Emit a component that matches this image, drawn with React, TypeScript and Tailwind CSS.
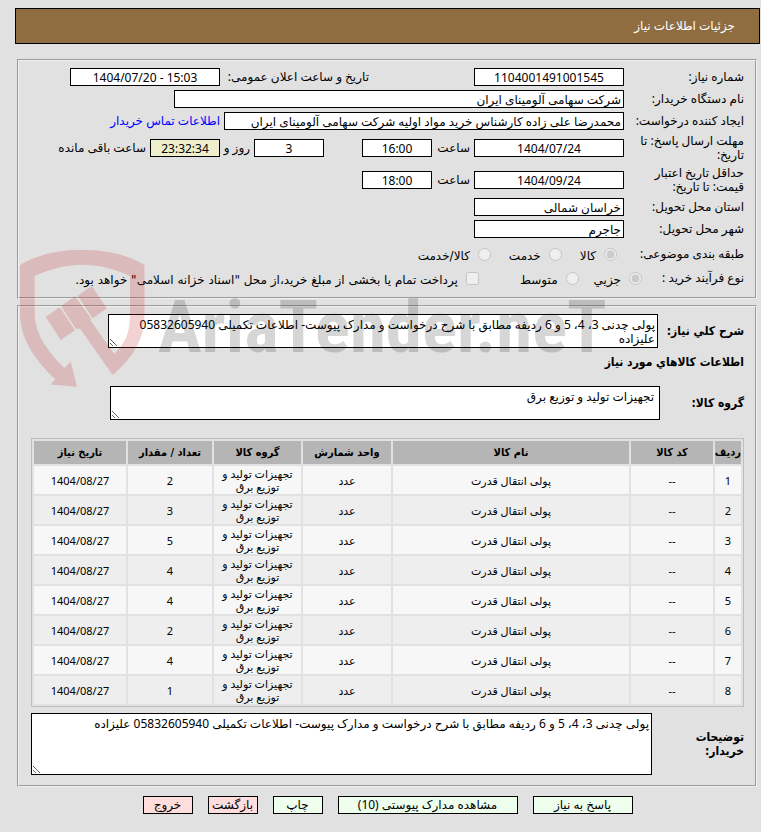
import React from 'react';

const fieldBox = 'h-[18px] border border-black bg-white px-[2px] text-[12px] leading-[16px] outline-none';
const panel = 'min-w-0 border-2 border-[#f0f0f0] [border-style:groove]';
const strong = "font-['DejaVu_Sans_Condensed','DejaVu_Sans',sans-serif] font-bold";

const items = [
  { id: 1, qty: 2 },
  { id: 2, qty: 3 },
  { id: 3, qty: 5 },
  { id: 4, qty: 4 },
  { id: 5, qty: 4 },
  { id: 6, qty: 2 },
  { id: 7, qty: 4 },
  { id: 8, qty: 1 },
];

const columns = [
  { title: 'ردیف', width: 'w-[26px]' },
  { title: 'کد کالا', width: 'w-[82px]' },
  { title: 'نام کالا', width: '' },
  { title: 'واحد شمارش', width: 'w-[88px]' },
  { title: 'گروه کالا', width: 'w-[87px]' },
  { title: 'تعداد / مقدار', width: 'w-[84px]' },
  { title: 'تاریخ نیاز', width: 'w-[92px]' },
];

interface RowProps {
  id?: string;
  label: string;
  children: React.ReactNode;
}

const Row: React.FC<RowProps> = ({ id, label, children }) => (
  <div className="flex min-h-[18px] items-center">
    <label htmlFor={id} className="w-[120px] shrink-0 pl-1">{label}</label>
    {children}
  </div>
);

interface ChoiceProps {
  type?: 'radio' | 'checkbox';
  name: string;
  text: string;
  checked?: boolean;
}

const Choice: React.FC<ChoiceProps> = ({ type = 'radio', name, text, checked = false }) => (
  <label className="flex items-center gap-2 whitespace-nowrap font-['DejaVu_Sans',sans-serif]">
    <input type={type} name={name} defaultChecked={checked} disabled className="m-0 size-[13px]" />
    <span className="pt-1">{text}</span>
  </label>
);

const Watermark: React.FC = () => (
  <svg
    aria-hidden="true"
    className="pointer-events-none absolute top-[245px] left-[15px]"
    width="600"
    height="150"
    viewBox="15 245 600 150"
  >
    <g fill="#c01c20" fillOpacity="0.2">
      <path d="M20 265.300C35 255 58 250 82 250S130 255 144.500 265.300V314C144.500 340 133 357 112.700 375L80 328.500L76 329L61 306L75 296.300L91 318.500L90.500 320.500L114.300 354C125 343 130 334 130 315V276C97 261 68 261 34.700 276V313C34.700 334 48 352 64.500 368L70.700 361.700L77 386.700L50.700 384.500L55.200 379.300C36 361 20 339 20 314Z" />
      <path d="M45.700 316.700L59.700 307.300L75 330.300L60.700 340Z" />
      <path d="M77.700 295.700L91.700 286L106.700 308.300L92.700 318.300Z" />
    </g>
    <text
      x="158"
      y="352"
      direction="ltr"
      fill="#000000"
      fillOpacity="0.16"
      className="font-['Roboto_Condensed','Open_Sans_Condensed','Noto_Sans_ExtraCondensed','Noto_Sans_Condensed','Liberation_Sans',sans-serif] text-[73px] font-bold"
    >
      AriaTender.neT
    </text>
  </svg>
);

const App: React.FC = () => {
  return (
    <div
      dir="rtl"
      className="relative min-h-screen bg-[#e1e1e1] pt-2 pr-px pb-4 pl-[15px] font-['Noto_Sans','DejaVu_Sans',sans-serif] text-[12px] leading-[14px] text-black"
    >
      <header className="flex h-9 items-center border border-black bg-[#8f6d40] px-6 text-white">
        <h1>جزئیات اطلاعات نیاز</h1>
      </header>

      <main className="mt-[15px] mr-[3px] ml-[2px] flex flex-col gap-[6px]">
        <fieldset className={`${panel} px-[11px] pt-[7px] pb-2`}>
          <div className="flex flex-col gap-1">
            <Row id="number" label="شماره نیاز:">
              <input id="number" readOnly defaultValue="1104001491001545" className={`${fieldBox} w-[150px] text-center`} />
              <div className="mr-[105px] flex items-center">
                <label htmlFor="announce" className="w-[149px] whitespace-nowrap">تاریخ و ساعت اعلان عمومی:</label>
                <input id="announce" dir="ltr" readOnly defaultValue="1404/07/20 - 15:03" className={`${fieldBox} w-[150px] text-center`} />
              </div>
            </Row>
            <Row id="buyer" label="نام دستگاه خریدار:">
              <input id="buyer" readOnly defaultValue="شرکت سهامی آلومینای ایران" className={`${fieldBox} w-[450px]`} />
            </Row>
            <Row id="creator" label="ایجاد کننده درخواست:">
              <input id="creator" readOnly defaultValue="محمدرضا علی زاده کارشناس خرید مواد اولیه شرکت سهامی آلومینای ایران" className={`${fieldBox} w-[400px]`} />
              <a href="#contact" className="mr-1 whitespace-nowrap text-[#0000ff]">اطلاعات تماس خریدار</a>
            </Row>
            <Row id="deadline" label="مهلت ارسال پاسخ: تا تاریخ:">
              <input id="deadline" readOnly defaultValue="1404/07/24" className={`${fieldBox} w-[150px] text-center`} />
              <label htmlFor="deadline-time" className="w-[42px] pr-1">ساعت</label>
              <input id="deadline-time" readOnly defaultValue="16:00" className={`${fieldBox} w-[70px] text-center`} />
              <input id="days" readOnly defaultValue="3" className={`${fieldBox} mr-[38px] w-[70px] text-center`} />
              <label htmlFor="days" className="w-[34px] pr-1 whitespace-nowrap">روز و</label>
              <input id="left" readOnly defaultValue="23:32:34" className="h-[18px] w-[70px] border border-black bg-[#eeeecc] text-center text-[12px] leading-[16px] outline-none" />
              <label htmlFor="left" className="pr-1 whitespace-nowrap">ساعت باقی مانده</label>
            </Row>
            <Row id="validity" label="حداقل تاریخ اعتبار قیمت: تا تاریخ:">
              <input id="validity" readOnly defaultValue="1404/09/24" className={`${fieldBox} w-[150px] text-center`} />
              <label htmlFor="validity-time" className="w-[42px] pr-1">ساعت</label>
              <input id="validity-time" readOnly defaultValue="18:00" className={`${fieldBox} w-[70px] text-center`} />
            </Row>
            <Row id="province" label="استان محل تحویل:">
              <input id="province" readOnly defaultValue="خراسان شمالی" className={`${fieldBox} w-[150px]`} />
            </Row>
            <Row id="city" label="شهر محل تحویل:">
              <input id="city" readOnly defaultValue="جاجرم" className={`${fieldBox} w-[150px]`} />
            </Row>
          </div>

          <div className="mt-[5px] flex h-[22px] items-center">
            <span className="w-[119px]">طبقه بندی موضوعی:</span>
            <div className="flex gap-[18px] pr-2">
              <Choice name="category" text="کالا" checked />
              <Choice name="category" text="خدمت" />
              <Choice name="category" text="کالا/خدمت" />
            </div>
          </div>
          <div className="mt-[2px] flex h-[22px] items-center">
            <span className="w-[102px]">نوع فرآیند خرید :</span>
            <div className="flex gap-[15px]">
              <Choice name="process" text="جزیي" checked />
              <Choice name="process" text="متوسط" />
            </div>
            <div className="mr-[41px]">
              <Choice type="checkbox" name="treasury" text={'پرداخت تمام یا بخشی از مبلغ خرید،از محل "اسناد خزانه اسلامی" خواهد بود.'} />
            </div>
          </div>
        </fieldset>

        <fieldset className={`${panel} pt-[7px] pr-[11px] pb-[10px] pl-3`}>
          <div className="flex items-center">
            <label htmlFor="summary" className={`${strong} w-[86px] shrink-0 whitespace-nowrap`}>شرح کلي نیاز:</label>
            <textarea
              id="summary"
              readOnly
              defaultValue="پولی چدنی 3، 4، 5 و 6 ردیفه مطابق با شرح درخواست و مدارک پیوست- اطلاعات تکمیلی 05832605940 علیزاده"
              className="h-[34px] w-[550px] resize overflow-hidden border border-black bg-white px-[2px] py-[3px] outline-none"
            />
          </div>
          <h2 className={`${strong} mt-[7px]`}>اطلاعات کالاهاي مورد نیاز</h2>
          <div className="mt-[17px] flex items-center">
            <label htmlFor="group" className={`${strong} w-[84px] shrink-0`}>گروه کالا:</label>
            <textarea
              id="group"
              readOnly
              defaultValue="تجهیزات تولید و توزیع برق"
              className="h-[34px] w-[550px] resize overflow-hidden border border-black bg-white px-[5px] py-[3px] outline-none"
            />
          </div>

          <table className="mt-[18px] w-full table-fixed border-separate border-spacing-[2px] border border-[#bebebe] text-center text-[11px] leading-[13px]">
            <thead>
              <tr className="h-[23px] bg-[#b5b5b5]">
                {columns.map((column) => (
                  <th key={column.title} className={`${strong} ${column.width} p-0 whitespace-nowrap`}>{column.title}</th>
                ))}
              </tr>
            </thead>
            <tbody>
              {items.map((item) => (
                <tr key={item.id} className="h-[28px] odd:bg-[#f7f7f7] even:bg-[#eeeeee]">
                  <td className="p-0">{item.id}</td>
                  <td className="p-0">--</td>
                  <td className="p-0">پولی انتقال قدرت</td>
                  <td className="p-0">عدد</td>
                  <td className="px-1 py-px">تجهیزات تولید و توزیع برق</td>
                  <td className="p-0">{item.qty}</td>
                  <td className="p-0">1404/08/27</td>
                </tr>
              ))}
            </tbody>
          </table>

          <div className="mt-[6px] flex items-center">
            <label htmlFor="notes" className={`${strong} w-[92px] shrink-0 pl-5`}>توضیحات خریدار:</label>
            <textarea
              id="notes"
              readOnly
              defaultValue="پولی چدنی 3، 4، 5 و 6 ردیفه مطابق با شرح درخواست و مدارک پیوست- اطلاعات تکمیلی 05832605940 علیزاده"
              className="h-[62px] min-w-0 flex-1 resize border border-black bg-white px-[2px] py-[3px] outline-none"
            />
          </div>
        </fieldset>
      </main>

      <footer className="mt-[9px] flex justify-center gap-[15px] whitespace-nowrap">
        <button type="button" className="h-[18px] w-[100px] border border-black bg-[#eeffee]">پاسخ به نیاز</button>
        <button type="button" className="h-[18px] w-[180px] border border-black bg-[#eeffee]">مشاهده مدارک پیوستی (10)</button>
        <button type="button" className="h-[18px] w-[50px] border border-black bg-[#eeffee]">چاپ</button>
        <button type="button" className="h-[18px] w-[50px] border border-black bg-[#ffdddd]">بازگشت</button>
        <button type="button" className="h-[18px] w-[50px] border border-black bg-[#ffdddd]">خروج</button>
      </footer>

      <Watermark />
    </div>
  );
};

export default App;
